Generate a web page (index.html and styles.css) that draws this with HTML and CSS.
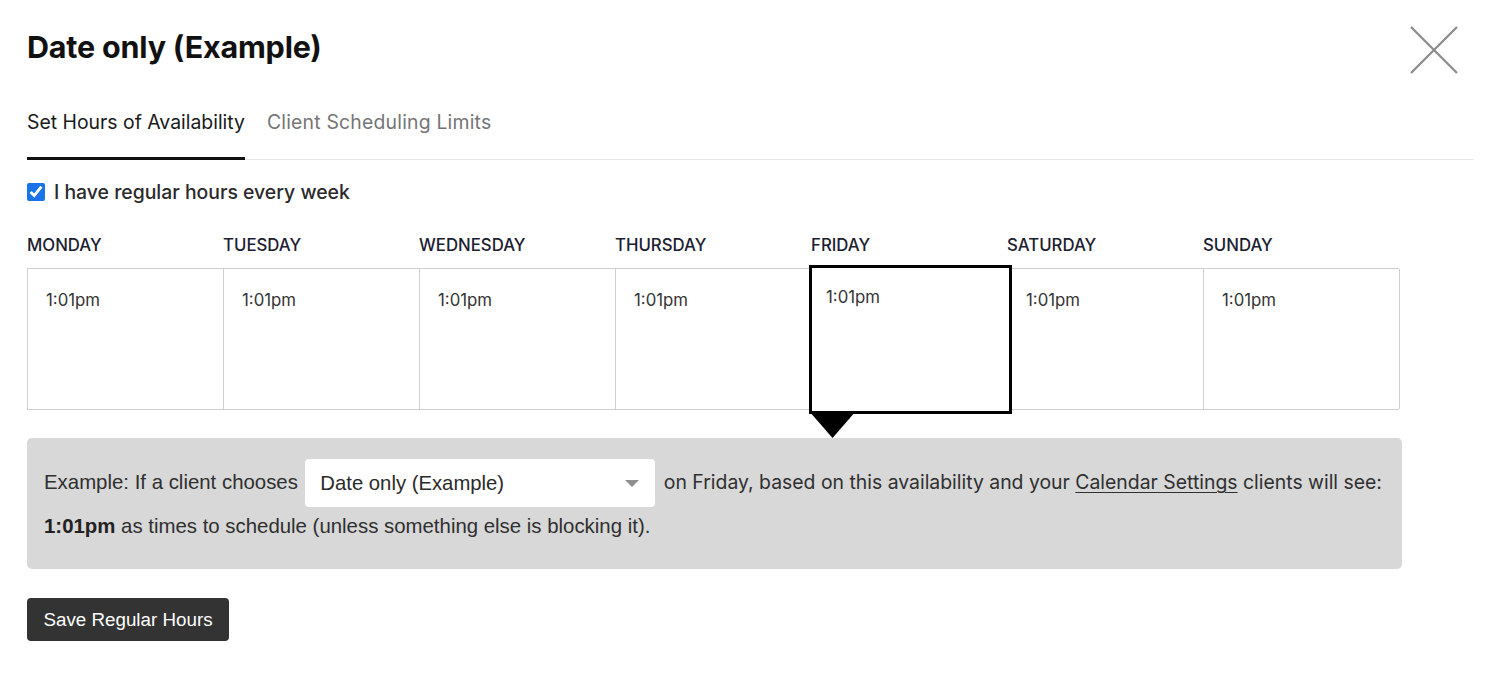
FILE: index.html
```html
<!DOCTYPE html>
<html lang="en">
<head>
<meta charset="utf-8">
<title>Date only (Example)</title>
<link rel="stylesheet" href="styles.css">
</head>
<body>
<div class="modal">
  <header class="head">
    <h1 class="title">Date only (Example)</h1>
    <button class="close" aria-label="Close">
      <svg width="48" height="48" viewBox="0 0 48 48"><path d="M1 1 L47 47 M47 1 L1 47" stroke="#8a8a8a" stroke-width="2.2" fill="none"/></svg>
    </button>
  </header>
  <nav class="tabs">
    <span class="tab active">Set Hours of Availability</span>
    <span class="tab">Client Scheduling Limits</span>
  </nav>
  <label class="check"><input type="checkbox" checked> I have regular hours every week</label>
  <div class="days">
    <div class="day-label">MONDAY</div>
    <div class="day-label">TUESDAY</div>
    <div class="day-label">WEDNESDAY</div>
    <div class="day-label">THURSDAY</div>
    <div class="day-label">FRIDAY</div>
    <div class="day-label">SATURDAY</div>
    <div class="day-label">SUNDAY</div>
  </div>
  <div class="grid">
    <div class="cell">1:01pm</div>
    <div class="cell">1:01pm</div>
    <div class="cell">1:01pm</div>
    <div class="cell">1:01pm</div>
    <div class="cell selected">1:01pm</div>
    <div class="cell">1:01pm</div>
    <div class="cell">1:01pm</div>
  </div>
  <div class="example">
    <p class="example-text"><span class="narrow">Example: If a client chooses</span> <span class="select"><span class="select-label">Date only (Example)</span><span class="caret"></span></span> on Friday, based on this availability and your <a href="#" class="link">Calendar Settings</a> clients will see: <span class="narrow"><b>1:01pm</b> as times to schedule (unless something else is blocking it).</span></p>
  </div>
  <button class="save">Save Regular Hours</button>
</div>
</body>
</html>
```
FILE: styles.css
```css
* { box-sizing: border-box; }
body {
  margin: 0;
  background: #fff;
  font-family: Inter, "Noto Sans", sans-serif;
  color: #333;
}
.modal {
  padding: 20px 26px 0 27px;
}
.head {
  display: flex;
  justify-content: space-between;
  align-items: flex-start;
}
.title {
  margin: 0;
  font-size: 30.5px;
  line-height: 54px;
  font-weight: 700;
  color: #111;
  letter-spacing: -0.2px;
}
.close {
  margin: 6px 16px 0 0;
  padding: 0;
  border: 0;
  background: none;
  width: 48px;
  height: 48px;
  display: block;
}
.close svg { display: block; }
.tabs {
  display: flex;
  gap: 22px;
  margin-top: 36px;
  border-bottom: 1px solid #e8e8e8;
}
.tab {
  font-size: 19.4px;
  line-height: 24px;
  padding-bottom: 23px;
  color: #757575;
  border-bottom: 3px solid transparent;
  margin-bottom: -1px;
  letter-spacing: 0.2px;
}
.tab.active {
  color: #1a1a1a;
  border-bottom-color: #111;
  letter-spacing: 0;
}
.check {
  display: flex;
  align-items: center;
  gap: 9px;
  margin-top: 20px;
  font-size: 19.4px;
  line-height: 24px;
  font-weight: 500;
  color: #2a2a2a;
}
.check input {
  margin: 0;
  width: 18px;
  height: 18px;
  accent-color: #1a73e8;
}
.days, .grid {
  display: grid;
  grid-template-columns: repeat(7, 196px);
}
.days { margin-top: 31px; }
.day-label {
  font-size: 16.8px;
  line-height: 20px;
  font-weight: 500;
  color: #1b2030;
}
.grid {
  margin-top: 13px;
  border-top: 1px solid #cfcfcf;
  border-bottom: 1px solid #cfcfcf;
  border-left: 1px solid #cfcfcf;
  width: 1372px;
}
.cell {
  height: 140px;
  border-right: 1px solid #cfcfcf;
  padding: 20px 18px;
  font-size: 16.8px;
  line-height: 22px;
  color: #333;
}
.selected {
  position: relative;
  z-index: 1;
  background: #fff;
  height: auto;
  margin: -4px -4px -5px -3px;
  border: 3px solid #000;
  padding: 18px 14px;
}
.selected::after {
  content: "";
  position: absolute;
  top: 100%;
  left: -3px;
  width: 47px;
  height: 27px;
  background: #000;
  clip-path: polygon(0 0, 100% 0, 50% 100%);
}
.example {
  margin-top: 28px;
  width: 1375px;
  background: #d8d8d8;
  border-radius: 5px;
  padding: 23px 17px 21px 17px;
}
.example-text {
  margin: 0;
  font-size: 19.4px;
  line-height: 43px;
  color: #2f2f2f;
}
.narrow {
  font-family: "Liberation Sans", Arial, sans-serif;
  font-size: 20.4px;
}
.narrow b { font-weight: 700; color: #222; }
.select {
  display: inline-flex;
  align-items: center;
  justify-content: space-between;
  vertical-align: middle;
  width: 350px;
  height: 48px;
  margin: -3px 3px -2px 2px;
  padding: 0 16px 0 15px;
  background: #fff;
  border-radius: 4px;
  font-family: "Liberation Sans", Arial, sans-serif;
  font-size: 20.3px;
  color: #2a2a2a;
}
.caret {
  width: 0;
  height: 0;
  border-left: 7px solid transparent;
  border-right: 7px solid transparent;
  border-top: 7px solid #8f8f8f;
}
.link {
  color: #2f2f2f;
  text-decoration: underline;
  text-underline-offset: 3px;
  text-decoration-thickness: 1px;
}
.save {
  display: block;
  margin-top: 29px;
  width: 202px;
  height: 43px;
  border: 0;
  border-radius: 4px;
  background: #333;
  color: #fff;
  font-family: "Liberation Sans", Arial, sans-serif;
  font-size: 18.8px;
  padding: 0;
}
```
